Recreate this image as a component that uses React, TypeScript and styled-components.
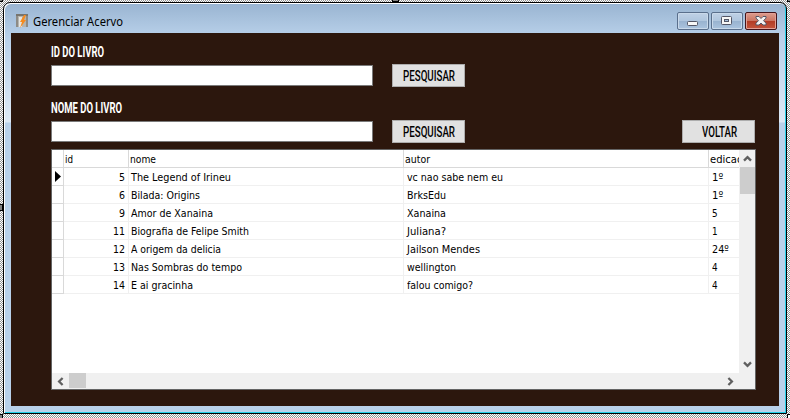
import React, { useLayoutEffect, useRef, useState } from "react";
import styled, { createGlobalStyle, css } from "styled-components";

const Global = createGlobalStyle`
  * { box-sizing: border-box; }
  body { margin: 0; overflow: hidden; }
`;

const Surface = styled.div`
  position: relative;
  width: 790px;
  height: 418px;
  padding: 2px 3px 4px;
  background: #fff conic-gradient(#969696 25%, #fff 0 50%, #969696 0 75%, #fff 0) 0 0 / 2px 2px;
`;

const Handle = styled.i<{ $x: number; $y: number; $active?: boolean }>`
  position: absolute;
  left: ${(p) => p.$x}px;
  top: ${(p) => p.$y}px;
  width: 7px;
  height: 7px;
  border: 1px solid #000;
  background: ${(p) => (p.$active ? "#fff" : "#808080")};
`;

const Frame = styled.div`
  display: flex;
  flex-direction: column;
  width: 784px;
  height: 412px;
  border: 1px solid #000;
  border-radius: 7px 7px 0 0;
  padding: 1px 7px 7px 7px;
  background: linear-gradient(#99b4d1 0, #b9d1ea 34px, #dde9f5 119px, #b9d1ea 120px, #b9d1ea 100%);
  box-shadow: inset 1px 1px 0 #fff, inset -1px -1px 0 #22cfe8;
`;

const TitleBar = styled.header`
  display: flex;
  align-items: center;
  flex: 0 0 29px;
  padding: 5px 2px 0 4px;
`;

const Title = styled.h1`
  flex: 1;
  margin: 2px 0 0 4px;
  font: 400 12px/16px "Noto Sans", sans-serif;
  color: #000;
`;

const CaptionGroup = styled.div`
  display: flex;
  gap: 2px;
`;

const CaptionButton = styled.button<{ $danger?: boolean }>`
  display: grid;
  place-items: center;
  width: 32px;
  height: 18px;
  padding: 0;
  border: 1px solid ${(p) => (p.$danger ? "#43141a" : "#5a6f8c")};
  border-radius: 2px;
  box-shadow: inset 0 0 0 1px ${(p) => (p.$danger ? "#e2a096" : "#c9d9ea")};
  background: ${(p) =>
    p.$danger
      ? "linear-gradient(#dc9d8f 0, #cc7562 47%, #b23b25 50%, #c4553c 100%)"
      : "linear-gradient(#bfd1e6 0, #b0c6de 47%, #98b2cf 50%, #abc4df 100%)"};
`;

const Body = styled.main`
  flex: 1;
  padding: 11px 24px 0 40px;
  background: #2c170d;
`;

const labelFont = css`
  font-family: Roboto, "Liberation Sans", sans-serif;
  font-size: 15.5px;
  line-height: 16px;
`;

const FieldLabel = styled.label`
  ${labelFont}
  display: block;
  height: 21px;
  font-weight: 700;
  color: #fff;
`;

const FieldRow = styled.div`
  display: flex;
  align-items: flex-start;
  height: 35px;
`;

const Input = styled.input`
  width: 322px;
  height: 21px;
  margin: 0 19px 0 0;
  border: 1px solid #7a7a7a;
  background: #fff;
`;

const Button = styled.button<{ $end?: boolean }>`
  ${labelFont}
  display: flex;
  align-items: center;
  justify-content: center;
  width: 73px;
  height: 23px;
  margin: -1px 0 0 ${(p) => (p.$end ? "auto" : "0")};
  padding: 0 0 0 1px;
  border: 1px solid #adadad;
  background: #e1e1e1;
  color: #000;
  font-weight: 500;
`;

const Grid = styled.section`
  display: grid;
  grid-template: 223px 16px / 687px 16px;
  width: 705px;
  height: 241px;
  margin-top: -7px;
  border: 1px solid #646464;
  background: #f0f0f0;
`;

const Viewport = styled.div`
  overflow: hidden;
  background: #fff;
`;

const Row = styled.div`
  display: grid;
  grid-template-columns: 12px 65px 275px 305px 30px;
  height: 18px;
  font: 11px/19px "DejaVu Sans Condensed", "DejaVu Sans", sans-serif;
  color: #000;
`;

const Cell = styled.div<{ $head?: boolean; $right?: boolean }>`
  overflow: hidden;
  padding: ${(p) => (p.$right ? "0 3px 0 0" : p.$head ? "0 0 0 1px" : "0 0 0 2px")};
  text-align: ${(p) => (p.$right ? "right" : "left")};
  white-space: nowrap;
  border-right: 1px solid ${(p) => (p.$head ? "#d9d9d9" : "#f0f0f0")};
  border-bottom: 1px solid ${(p) => (p.$head ? "#d9d9d9" : "#f0f0f0")};

  &:last-child { border-right: 0; }
  &:nth-child(n + 4):not(:first-child) { padding-left: ${(p) => (p.$head ? "1px" : "3px")}; }
`;

const Gutter = styled.div`
  display: flex;
  align-items: center;
  padding-left: 3px;
  border-right: 1px solid #d9d9d9;
  border-bottom: 1px solid #d9d9d9;
`;

const Scrollbar = styled.div<{ $horizontal?: boolean }>`
  display: flex;
  flex-direction: ${(p) => (p.$horizontal ? "row" : "column")};
  align-items: ${(p) => (p.$horizontal ? "flex-start" : "center")};
  justify-content: space-between;
  background: #f0f0f0;
`;

const Thumb = styled.div<{ $horizontal?: boolean }>`
  width: ${(p) => (p.$horizontal ? "17px" : "15px")};
  height: ${(p) => (p.$horizontal ? "15px" : "27px")};
  margin: ${(p) => (p.$horizontal ? "0 auto 0 0" : "0 0 auto")};
  background: #cdcdcd;
`;

const Arrow = styled.span`
  display: grid;
  place-items: center;
  width: 17px;
  height: 17px;
  flex: none;
`;

const FitSpan = styled.span`
  display: inline-block;
  white-space: nowrap;
  transform-origin: 0 50%;
`;

/** Keeps a caption at a fixed width, condensing the glyphs when needed. */
function Fit({ width, children }: { width: number; children: string }) {
  const ref = useRef<HTMLSpanElement>(null);
  const [scale, setScale] = useState(1);
  useLayoutEffect(() => {
    if (ref.current) setScale(width / ref.current.getBoundingClientRect().width);
  }, [width]);
  return (
    <FitSpan ref={ref} style={scale === 1 ? undefined : { transform: `scaleX(${scale})`, width }}>
      {children}
    </FitSpan>
  );
}

function Chevron({ turn }: { turn: number }) {
  return (
    <svg width="9" height="9" viewBox="0 0 9 9" transform={`rotate(${turn})`}>
      <path d="M1 6.6 4.5 3.1 8 6.6" fill="none" stroke="#606060" strokeWidth="2.3" />
    </svg>
  );
}

type Text = [string, number];
const books: { id: string; name: Text; author: Text; edition: string }[] = [
  { id: "5", name: ["The Legend of Irineu", 100], author: ["vc nao sabe nem eu", 96], edition: "1º" },
  { id: "6", name: ["Bilada: Origins", 69], author: ["BrksEdu", 39], edition: "1º" },
  { id: "9", name: ["Amor de Xanaina", 82], author: ["Xanaina", 39], edition: "5" },
  { id: "11", name: ["Biografia de Felipe Smith", 118], author: ["Juliana?", 39], edition: "1" },
  { id: "12", name: ["A origem da delicia", 90], author: ["Jailson Mendes", 73], edition: "24º" },
  { id: "13", name: ["Nas Sombras do tempo", 111], author: ["wellington", 49], edition: "4" },
  { id: "14", name: ["E ai gracinha", 62], author: ["falou comigo?", 66], edition: "4" },
];

export default function App() {
  return (
    <Surface>
      <Global />
      <Frame>
        <TitleBar>
          <svg width="14" height="14" viewBox="0 0 14 14">
            <path d="M1 0h12v2H1z" fill="#77756f" />
            <path d="M1 2h12v11H1z" fill="#b5b5b0" />
            <path d="M1 2h2v11H1zM11 2h2v11h-2z" fill="#8d8b86" />
            <path d="M4 3h3v10H4z" fill="#e5e5e2" />
            <path d="M9 1h2L9 6h2L5 14l2-6H5z" fill="#f68b1e" />
          </svg>
          <Title><Fit width={90}>Gerenciar Acervo</Fit></Title>
          <CaptionGroup>
            <CaptionButton aria-label="Minimizar">
              <svg width="12" height="12" viewBox="0 0 12 12">
                <rect x=".5" y="6.5" width="10" height="4" rx="1" fill="#f7f7f7" stroke="#535666" />
              </svg>
            </CaptionButton>
            <CaptionButton aria-label="Maximizar">
              <svg width="12" height="10" viewBox="0 0 12 10">
                <rect x=".5" y=".5" width="10" height="8" rx="1" fill="#f7f7f7" stroke="#535666" />
                <rect x="3.5" y="3.5" width="4" height="2" fill="#a5bdd8" stroke="#535666" />
              </svg>
            </CaptionButton>
            <CaptionButton $danger aria-label="Fechar">
              <svg width="12" height="10" viewBox="0 0 12 10">
                <path d="M1 .5h3l2 2 2-2h3v1.7L8.5 4.6 11 7.2V9H8L6 7 4 9H1V7.2l2.5-2.6L1 2.2z" fill="#f5f3f2" stroke="#535666" />
              </svg>
            </CaptionButton>
          </CaptionGroup>
        </TitleBar>
        <Body>
          <FieldLabel><Fit width={53}>ID DO LIVRO</Fit></FieldLabel>
          <FieldRow>
            <Input />
            <Button><Fit width={52}>PESQUISAR</Fit></Button>
          </FieldRow>
          <FieldLabel><Fit width={71}>NOME DO LIVRO</Fit></FieldLabel>
          <FieldRow>
            <Input />
            <Button><Fit width={52}>PESQUISAR</Fit></Button>
            <Button $end><Fit width={35}>VOLTAR</Fit></Button>
          </FieldRow>
          <Grid>
            <Viewport>
              <Row>
                <Gutter />
                <Cell $head><Fit width={8}>id</Fit></Cell>
                <Cell $head><Fit width={26}>nome</Fit></Cell>
                <Cell $head><Fit width={25}>autor</Fit></Cell>
                <Cell $head><Fit width={33}>edicao</Fit></Cell>
              </Row>
              {books.map((b, i) => (
                <Row key={b.id}>
                  <Gutter>
                    {i === 0 && (
                      <svg width="6" height="11" viewBox="0 0 6 11">
                        <path d="M0 0 6 5.5 0 11z" />
                      </svg>
                    )}
                  </Gutter>
                  <Cell $right><Fit width={b.id.length * 6}>{b.id}</Fit></Cell>
                  <Cell><Fit width={b.name[1]}>{b.name[0]}</Fit></Cell>
                  <Cell><Fit width={b.author[1]}>{b.author[0]}</Fit></Cell>
                  <Cell><Fit width={b.edition.length * 5.6}>{b.edition}</Fit></Cell>
                </Row>
              ))}
            </Viewport>
            <Scrollbar>
              <Arrow><Chevron turn={0} /></Arrow>
              <Thumb />
              <Arrow><Chevron turn={180} /></Arrow>
            </Scrollbar>
            <Scrollbar $horizontal>
              <Arrow><Chevron turn={270} /></Arrow>
              <Thumb $horizontal />
              <Arrow><Chevron turn={90} /></Arrow>
            </Scrollbar>
          </Grid>
        </Body>
      </Frame>
      <Handle $x={-4} $y={-5} />
      <Handle $x={392} $y={-5} />
      <Handle $x={-4} $y={204} />
      <Handle $x={-4} $y={414} />
      <Handle $x={787} $y={-5} />
      <Handle $x={787} $y={414} $active />
    </Surface>
  );
}
